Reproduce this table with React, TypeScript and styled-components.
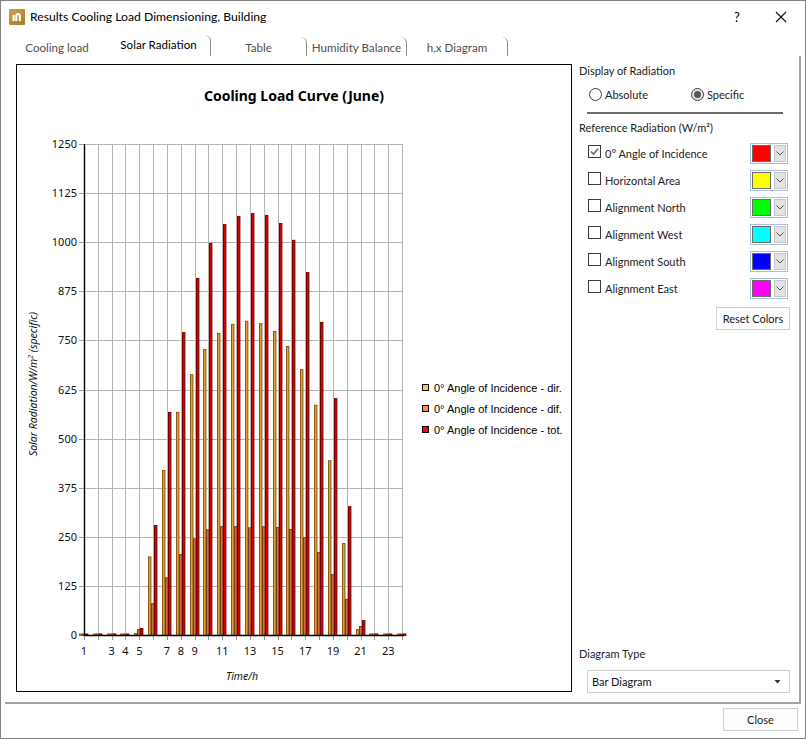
import React from "react";
import styled, { createGlobalStyle } from "styled-components";

const GlobalStyle = createGlobalStyle`
  html, body { margin: 0; padding: 0; background: #fff; }
  body { font-family: Lato, "Noto Sans", sans-serif; }
`;

const UI_FONT = `Lato, "Noto Sans", sans-serif`;
const CHART_FONT = `"Noto Sans", "Liberation Sans", sans-serif`;

const Window = styled.div`
  width: 806px;
  height: 739px;
  box-sizing: border-box;
  border: 1px solid #828282;
  background: #fff;
  display: flex;
  flex-direction: column;
  font-family: ${UI_FONT};
  font-size: 11px;
  color: #1a1a1a;
  overflow: hidden;
`;

const TitleBar = styled.div`
  height: 31px;
  flex: none;
  display: flex;
  align-items: center;
  padding-left: 8px;
`;

const TitleText = styled.span`
  margin-left: 5px;
  font-size: 12.2px;
  color: #000;
  flex: 1;
`;

const HelpButton = styled.span`
  width: 20px;
  text-align: center;
  font-size: 13px;
  color: #000;
  margin-right: 24px;
`;

const CloseX = styled.span`
  width: 20px;
  display: flex;
  justify-content: center;
  margin-right: 14px;
`;

const TabStrip = styled.div`
  height: 24px;
  flex: none;
  display: flex;
  align-items: flex-end;
  padding-left: 7px;
`;

const Tab = styled.div<{ $w: number; $active?: boolean; $divider?: boolean }>`
  box-sizing: border-box;
  width: ${(p) => p.$w}px;
  height: ${(p) => (p.$active ? 21 : 19)}px;
  padding-top: ${(p) => (p.$active ? 2 : 3)}px;
  line-height: 16px;
  text-align: center;
  font-size: 11.6px;
  color: ${(p) => (p.$active ? "#000" : "#505050")};
  border-right: ${(p) => (p.$divider ? "1px solid #8c8c8c" : "1px solid transparent")};
  border-top-right-radius: 6px;
  white-space: nowrap;
`;

const TabPage = styled.div`
  box-sizing: border-box;
  margin-left: 4px;
  width: 796px;
  height: 648px;
  flex: none;
  border-right: 2px solid #a3a3a3;
  border-bottom: 2px solid #a3a3a3;
  display: flex;
  padding: 8px 0 0 11px;
`;

const ChartFrame = styled.div`
  box-sizing: border-box;
  width: 556px;
  height: 628px;
  border: 1px solid #000;
  flex: none;
  display: flex;
`;

const Panel = styled.div`
  margin-left: 7px;
  width: 220px;
  display: flex;
  flex-direction: column;
  padding-bottom: 9px;
`;

const Heading = styled.div<{ $mt?: number }>`
  line-height: 14px;
  margin-top: ${(p) => p.$mt ?? 0}px;
  color: #222;
`;

const RadioRow = styled.div`
  display: flex;
  align-items: center;
  height: 14px;
  margin-top: 9px;
  padding-left: 10px;
`;

const RadioOption = styled.label<{ $w?: number }>`
  display: flex;
  align-items: center;
  width: ${(p) => (p.$w ? `${p.$w}px` : "auto")};
  color: #222;
`;

const RadioCircle = styled.span<{ $on?: boolean }>`
  box-sizing: border-box;
  width: 13px;
  height: 13px;
  border-radius: 50%;
  border: 1px solid #3c3c3c;
  background: ${(p) => (p.$on ? "#e4e4e4" : "#fff")};
  display: flex;
  align-items: center;
  justify-content: center;
  margin-right: 3px;
  &::after {
    content: "";
    width: 7px;
    height: 7px;
    border-radius: 50%;
    background: ${(p) => (p.$on ? "#555" : "transparent")};
  }
`;

const Separator = styled.div`
  margin: 11px 0 0 8px;
  width: 196px;
  height: 2px;
  background: #6a6a6a;
`;

const CheckList = styled.div`
  margin-top: 8px;
  display: flex;
  flex-direction: column;
  gap: 6px;
`;

const CheckRow = styled.div`
  height: 21px;
  display: flex;
  align-items: center;
  padding: 0 11px 0 9px;
`;

const CheckBox = styled.span`
  box-sizing: border-box;
  width: 13px;
  height: 13px;
  border: 1px solid #3a3a3a;
  background: #fff;
  display: flex;
  align-items: center;
  justify-content: center;
  margin-bottom: 5px;
  flex: none;
`;

const CheckLabel = styled.span`
  margin-left: 4px;
  flex: 1;
  color: #222;
`;

const ColorCombo = styled.div`
  box-sizing: border-box;
  width: 38px;
  height: 21px;
  border: 1px solid #a9bfdf;
  display: flex;
  align-items: stretch;
  padding: 1px;
  background: #fff;
`;

const Swatch = styled.span<{ $c: string }>`
  box-sizing: border-box;
  width: 19px;
  border: 1px solid #6b6b6b;
  background: ${(p) => p.$c};
`;

const ComboArrow = styled.span`
  box-sizing: border-box;
  margin-left: 3px;
  flex: 1;
  background: #e3e3e3;
  border: 1px solid #c6c6c6;
  display: flex;
  align-items: center;
  justify-content: center;
`;

const Button = styled.button<{ $w: number }>`
  box-sizing: border-box;
  width: ${(p) => p.$w}px;
  height: 23px;
  border: 1px solid #cfcfcf;
  background: #fdfdfd;
  font-family: ${UI_FONT};
  font-size: 11px;
  color: #222;
  padding: 0;
`;

const ResetRow = styled.div`
  display: flex;
  justify-content: flex-end;
  padding-right: 9px;
  margin-top: 8px;
`;

const Spacer = styled.div`
  flex: 1;
`;

const Select = styled.div`
  box-sizing: border-box;
  margin: 9px 9px 0 8px;
  height: 23px;
  border: 1px solid #cfcfcf;
  display: flex;
  align-items: center;
  padding: 0 8px 0 4px;
  color: #111;
`;

const SelectText = styled.span`
  flex: 1;
`;

const Footer = styled.div`
  flex: 1;
  display: flex;
  justify-content: flex-end;
  align-items: flex-start;
  padding: 4px 7px 0 0;
`;

/* ---------------- chart ---------------- */

const dir = [0, 0, 0, 0, 5, 200, 420, 568, 664, 728, 769, 792, 800, 794, 774, 736, 677, 586, 445, 234, 15, 0, 0, 0];
const dif = [0, 0, 0, 0, 15, 81, 147, 206, 246, 269, 277, 277, 274, 277, 275, 270, 249, 211, 155, 92, 23, 0, 0, 0];
const tot = [0, 0, 0, 0, 18, 280, 568, 771, 909, 998, 1046, 1067, 1074, 1069, 1049, 1006, 924, 797, 603, 328, 38, 0, 0, 0];

const X0 = 84;
const DX = 13.83;
const Y0 = 635;
const SC = 491 / 1250;
const hx = (h: number) => X0 + (h - 1) * DX;
const vy = (v: number) => Y0 - v * SC;

const ChartSvg: React.FC = () => {
  const yVals = Array.from({ length: 11 }, (_, i) => i * 125);
  const hours = Array.from({ length: 24 }, (_, i) => i + 1);
  const xLabels = [1, 3, 4, 5, 7, 8, 9, 11, 13, 15, 17, 19, 21, 23];
  const series = [
    { data: dir, fill: "#e2a23a", stroke: "#8a5812", off: -5 },
    { data: dif, fill: "#d0713a", stroke: "#7c3c14", off: -2 },
    { data: tot, fill: "#d60000", stroke: "#780000", off: 1 },
  ];
  const legend = [
    { c: "#ffc35f", t: "0° Angle of Incidence - dir.", y: 388 },
    { c: "#ff8a4a", t: "0° Angle of Incidence - dif.", y: 409 },
    { c: "#ff0000", t: "0° Angle of Incidence - tot.", y: 430 },
  ];
  return (
    <svg width={554} height={626} viewBox="17 65 554 626" style={{ display: "block" }}>
      <text x={294} y={101} textAnchor="middle" fontFamily={CHART_FONT} fontWeight={700} fontSize={14} fill="#000">
        Cooling Load Curve (June)
      </text>
      {/* grid */}
      {hours.slice(1).map((h) => (
        <line key={"v" + h} x1={Math.round(hx(h)) + 0.5} x2={Math.round(hx(h)) + 0.5} y1={vy(1250)} y2={Y0} stroke="#b4b4b4" strokeWidth={1} />
      ))}
      {yVals.slice(1).map((v) => (
        <line key={"h" + v} x1={X0} x2={402} y1={Math.round(vy(v)) + 0.5} y2={Math.round(vy(v)) + 0.5} stroke="#b4b4b4" strokeWidth={1} />
      ))}
      {/* ticks */}
      {yVals.map((v) => (
        <line key={"ty" + v} x1={79} x2={X0} y1={Math.round(vy(v)) + 0.5} y2={Math.round(vy(v)) + 0.5} stroke="#9a9a9a" strokeWidth={1} />
      ))}
      {hours.map((h) => (
        <line key={"tx" + h} x1={Math.round(hx(h)) + 0.5} x2={Math.round(hx(h)) + 0.5} y1={Y0} y2={640} stroke="#9a9a9a" strokeWidth={1} />
      ))}
      {/* bars */}
      {series.map((s, si) =>
        s.data.map((v, i) => {
          const x = Math.round(hx(i + 1)) + s.off;
          const top = Math.min(vy(v), Y0 - 1.5);
          return (
            <rect
              key={`b${si}-${i}`}
              x={x + 0.5}
              y={top + 0.5}
              width={2.4}
              height={Y0 - top}
              fill={s.fill}
              stroke={s.stroke}
              strokeWidth={1}
            />
          );
        })
      )}
      {/* axes */}
      <line x1={X0 + 0.5} x2={X0 + 0.5} y1={vy(1250)} y2={Y0 + 1} stroke="#000" strokeWidth={1.4} />
      <line x1={X0} x2={404} y1={Y0 + 0.5} y2={Y0 + 0.5} stroke="#000" strokeWidth={1.4} />
      {/* y labels */}
      {yVals.map((v) => (
        <text key={"yl" + v} x={77} y={vy(v) + 4} textAnchor="end" fontFamily={CHART_FONT} fontSize={11} fill="#111">
          {v}
        </text>
      ))}
      {xLabels.map((h) => (
        <text key={"xl" + h} x={hx(h)} y={655} textAnchor="middle" fontFamily={CHART_FONT} fontSize={11} fill="#111">
          {h}
        </text>
      ))}
      <text x={242} y={680} textAnchor="middle" fontFamily={CHART_FONT} fontStyle="italic" fontSize={10.5} fill="#111">
        Time/h
      </text>
      <text
        transform="translate(37 384) rotate(-90)"
        textAnchor="middle"
        fontFamily={CHART_FONT}
        fontStyle="italic"
        fontSize={10.5}
        fill="#111"
      >
        Solar Radiation/W/m
        <tspan fontSize={7} dy={-4}>
          2
        </tspan>
        <tspan dy={4}> (specific)</tspan>
      </text>
      {/* legend */}
      {legend.map((l) => (
        <g key={l.t}>
          <rect x={422.5} y={l.y - 3.5} width={6} height={6} fill={l.c} stroke="#000" strokeWidth={1} />
          <text x={434} y={l.y + 4} fontFamily={`"Liberation Sans", Arial, sans-serif`} fontSize={11} fill="#000">
            {l.t}
          </text>
        </g>
      ))}
    </svg>
  );
};

const AppIcon = () => (
  <svg width="16" height="16" viewBox="0 0 16 16">
    <defs>
      <linearGradient id="ig" x1="0" y1="0" x2="1" y2="1">
        <stop offset="0" stopColor="#d2a24a" />
        <stop offset="1" stopColor="#a8782e" />
      </linearGradient>
    </defs>
    <rect x="0" y="0" width="16" height="16" rx="1" fill="url(#ig)" />
    <rect x="3.5" y="6" width="2.2" height="6" fill="#fff" />
    <path d="M6.3 12 V6.2 Q6.3 4 9 4 Q11.8 4 11.8 6.8 V12 H9.8 V7 Q9.8 6 9 6 Q8.3 6 8.3 7 V12 Z" fill="#fff" />
  </svg>
);

const XIcon = () => (
  <svg width="12" height="12" viewBox="0 0 12 12">
    <path d="M1 1 L11 11 M11 1 L1 11" stroke="#111" strokeWidth="1.1" />
  </svg>
);

const Check = () => (
  <svg width="11" height="11" viewBox="0 0 11 11">
    <path d="M2 5.5 L4.5 8 L9 2.8" fill="none" stroke="#6a6a6a" strokeWidth="1.6" />
  </svg>
);

const Chevron = () => (
  <svg width="8" height="5" viewBox="0 0 8 5">
    <path d="M0.5 0.5 L4 4 L7.5 0.5" fill="none" stroke="#555" strokeWidth="1" />
  </svg>
);

const Caret = () => (
  <svg width="7" height="4" viewBox="0 0 7 4">
    <path d="M0.5 0 L6.5 0 L3.5 3.5 Z" fill="#333" />
  </svg>
);

const refItems = [
  { t: "0° Angle of Incidence", c: "#ff0000", on: true },
  { t: "Horizontal Area", c: "#ffff00" },
  { t: "Alignment North", c: "#00ff00" },
  { t: "Alignment West", c: "#00ffff" },
  { t: "Alignment South", c: "#0000ff" },
  { t: "Alignment East", c: "#ff00ff" },
];

const tabs = [
  { t: "Cooling load", w: 99 },
  { t: "Solar Radiation", w: 104, active: true, divider: true },
  { t: "Table", w: 96, divider: true },
  { t: "Humidity Balance", w: 100, divider: true },
  { t: "h,x Diagram", w: 101, divider: true },
];

export default function App() {
  return (
    <>
      <GlobalStyle />
      <Window>
        <TitleBar>
          <AppIcon />
          <TitleText>Results Cooling Load Dimensioning, Building</TitleText>
          <HelpButton>?</HelpButton>
          <CloseX>
            <XIcon />
          </CloseX>
        </TitleBar>
        <TabStrip>
          {tabs.map((t) => (
            <Tab key={t.t} $w={t.w} $active={t.active} $divider={t.divider}>
              {t.t}
            </Tab>
          ))}
        </TabStrip>
        <TabPage>
          <ChartFrame>
            <ChartSvg />
          </ChartFrame>
          <Panel>
            <Heading>Display of Radiation</Heading>
            <RadioRow>
              <RadioOption $w={102}>
                <RadioCircle />
                Absolute
              </RadioOption>
              <RadioOption>
                <RadioCircle $on />
                Specific
              </RadioOption>
            </RadioRow>
            <Separator />
            <Heading $mt={7}>Reference Radiation (W/m²)</Heading>
            <CheckList>
              {refItems.map((r) => (
                <CheckRow key={r.t}>
                  <CheckBox>{r.on && <Check />}</CheckBox>
                  <CheckLabel>{r.t}</CheckLabel>
                  <ColorCombo>
                    <Swatch $c={r.c} />
                    <ComboArrow>
                      <Chevron />
                    </ComboArrow>
                  </ColorCombo>
                </CheckRow>
              ))}
            </CheckList>
            <ResetRow>
              <Button $w={74}>Reset Colors</Button>
            </ResetRow>
            <Spacer />
            <Heading>Diagram Type</Heading>
            <Select>
              <SelectText>Bar Diagram</SelectText>
              <Caret />
            </Select>
          </Panel>
        </TabPage>
        <Footer>
          <Button $w={75}>Close</Button>
        </Footer>
      </Window>
    </>
  );
}
